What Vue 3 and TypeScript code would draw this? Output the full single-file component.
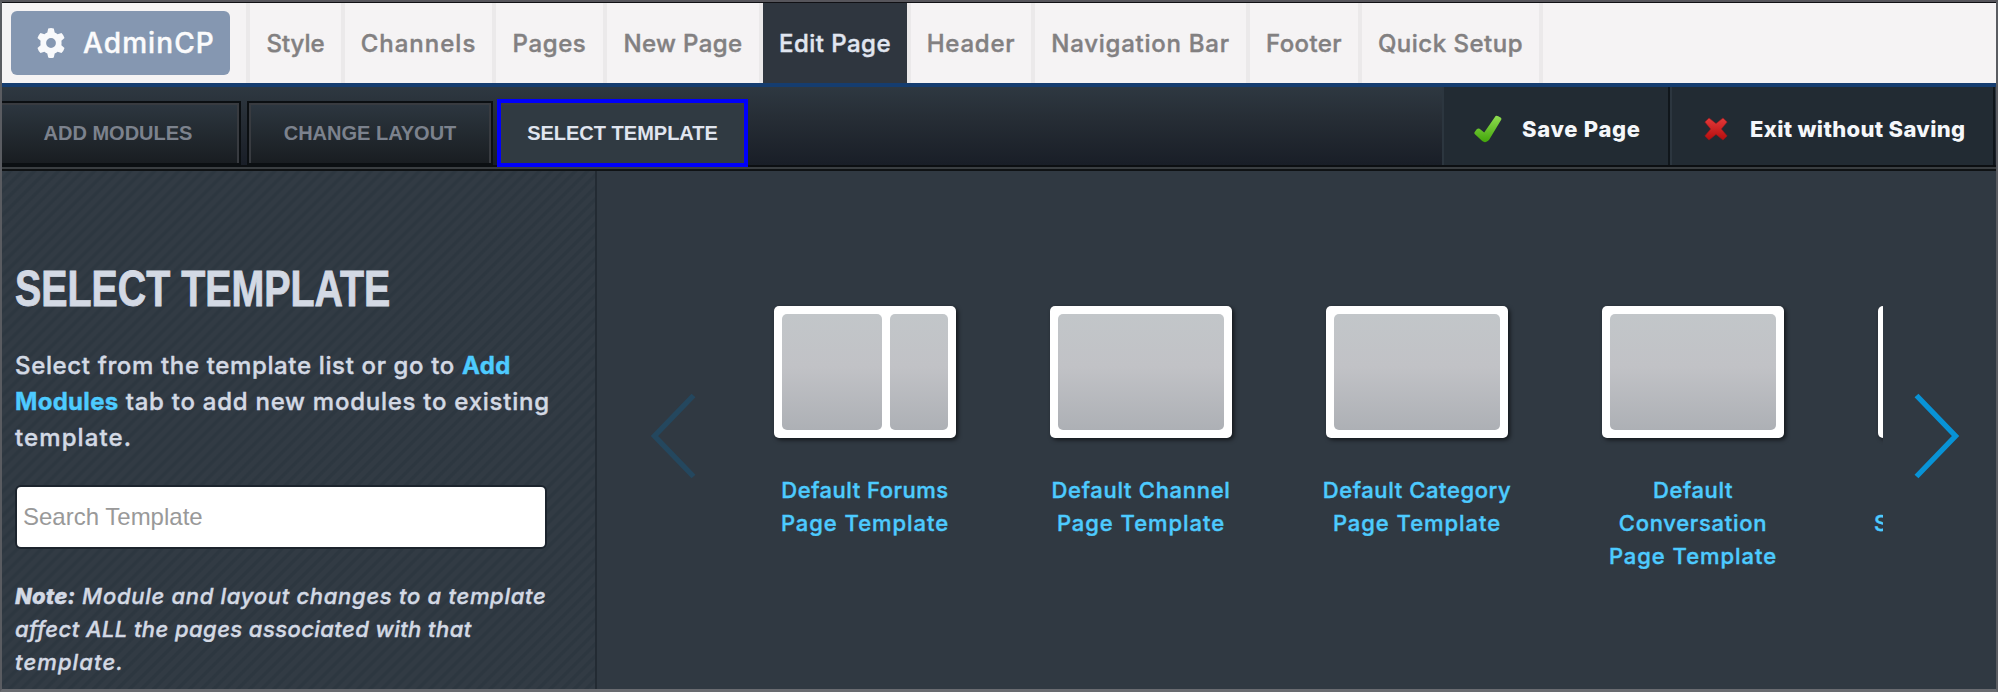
<script setup lang="ts">
interface NavItem {
  label: string
  width: number
  tracking: number
  active?: boolean
}

interface Line {
  text: string
  tracking: number
}

interface Template {
  lines: Line[]
  columns: number[]
}

const navItems: NavItem[] = [
  { label: 'Style', width: 95, tracking: 0 },
  { label: 'Channels', width: 151, tracking: 1 },
  { label: 'Pages', width: 111, tracking: 0.6 },
  { label: 'New Page', width: 156, tracking: 0.4 },
  { label: 'Edit Page', width: 148, tracking: 0.45, active: true },
  { label: 'Header', width: 124, tracking: 0.75 },
  { label: 'Navigation Bar', width: 215, tracking: 0.75 },
  { label: 'Footer', width: 112, tracking: 0.4 },
  { label: 'Quick Setup', width: 181, tracking: 0.5 },
]

const pageTemplate: Line = { text: 'Page Template', tracking: 0.95 }

const templates: Template[] = [
  { lines: [{ text: 'Default Forums', tracking: 0.5 }, pageTemplate], columns: [100, 58] },
  { lines: [{ text: 'Default Channel', tracking: 0.7 }, pageTemplate], columns: [166] },
  { lines: [{ text: 'Default Category', tracking: 0.6 }, pageTemplate], columns: [166] },
  {
    lines: [{ text: 'Default', tracking: 0.6 }, { text: 'Conversation', tracking: 0.7 }, pageTemplate],
    columns: [166],
  },
]
</script>

<template>
  <div class="window">
    <nav class="nav">
      <div class="brand-cell">
        <a class="brand">
          <svg class="gear" viewBox="0 0 28 30" width="28" height="30">
            <path
              fill="#f8f9fb"
              fill-rule="evenodd"
              d="M11.2 0.6 Q14 -0.4 16.8 0.6 L17.7 4.6 Q19.3 5.2 20.6 6.2 L24.5 5 Q26.8 7.2 27.5 10 L24.4 12.8 Q24.7 15 24.4 17.2 L27.5 20 Q26.8 22.8 24.5 25 L20.6 23.8 Q19.3 24.8 17.7 25.4 L16.8 29.4 Q14 30.4 11.2 29.4 L10.3 25.4 Q8.7 24.8 7.4 23.8 L3.5 25 Q1.2 22.8 0.5 20 L3.6 17.2 Q3.3 15 3.6 12.8 L0.5 10 Q1.2 7.2 3.5 5 L7.4 6.2 Q8.7 5.2 10.3 4.6 Z M14 10.1 A4.9 4.9 0 1 0 14 19.9 A4.9 4.9 0 1 0 14 10.1 Z"
            />
          </svg>
          <span>AdminCP</span>
        </a>
      </div>
      <a
        v-for="item in navItems"
        :key="item.label"
        class="nav-item"
        :class="{ active: item.active }"
        :style="{ width: item.width + 'px', letterSpacing: item.tracking + 'px' }"
      >{{ item.label }}</a>
    </nav>

    <div class="toolbar">
      <div class="tabs">
        <a class="tab first">ADD MODULES</a>
        <a class="tab second">CHANGE LAYOUT</a>
        <a class="tab selected">SELECT TEMPLATE</a>
      </div>
      <div class="actions">
        <a class="action save">
          <svg width="28" height="28" viewBox="0 0 28 28">
            <defs>
              <linearGradient id="check" x1="0" y1="0" x2="0" y2="1">
                <stop offset="0" stop-color="#8fdd50" />
                <stop offset="1" stop-color="#43a60b" />
              </linearGradient>
            </defs>
            <path fill="url(#check)" d="M21.6 1 Q23 .1 26.9 2.8 Q27.7 3.6 27.2 4.7 L15 25 Q11.5 28.7 8.2 26 L.7 19 Q0 18.1 .7 17 L2.7 14.2 Q4.1 13 5.6 13.8 L10.2 17.6 Z" />
          </svg>
          <span>Save Page</span>
        </a>
        <a class="action exit">
          <svg width="24" height="24" viewBox="0 0 24 24">
            <defs>
              <linearGradient id="cross" x1="0" y1="0" x2="0" y2="1">
                <stop offset="0" stop-color="#e43a3a" />
                <stop offset="1" stop-color="#b50d0d" />
              </linearGradient>
            </defs>
            <path fill="url(#cross)" stroke="#8e1a1e" stroke-width=".6" d="M5 .9 L12 6.6 L19 .9 L23.2 5 L17.4 12 L23.2 19 L19 23.1 L12 17.4 L5 23.1 L.8 19 L6.6 12 L.8 5 Z" />
          </svg>
          <span>Exit without Saving</span>
        </a>
      </div>
    </div>

    <main class="content">
      <aside class="side">
        <h1>SELECT TEMPLATE</h1>
        <p class="intro">
          <span class="i1">Select from the template list or go to <b>Add</b></span><br>
          <span class="i2"><b>Modules</b> tab to add new modules to existing</span><br>
          <span class="i3">template.</span>
        </p>
        <input class="search" type="text" placeholder="Search Template">
        <p class="note">
          <span class="n1"><b>Note:</b> Module and layout changes to a template</span><br>
          <span class="n2">affect ALL the pages associated with that</span><br>
          <span class="n3">template.</span>
        </p>
      </aside>

      <section class="carousel">
        <svg class="arrow prev" width="46" height="86" viewBox="0 0 46 86">
          <path d="M43.5 2.5 L4.5 43 L43.5 83.5" fill="none" stroke="#24475e" stroke-width="5.4" />
        </svg>
        <div class="track">
          <a v-for="(t, i) in templates" :key="i" class="card">
            <div class="thumb">
              <div v-for="(c, j) in t.columns" :key="j" class="col" :style="{ width: c + 'px' }"></div>
            </div>
            <div class="label">
              <div
                v-for="line in t.lines"
                :key="line.text"
                :style="{ letterSpacing: line.tracking + 'px' }"
              >{{ line.text }}</div>
            </div>
          </a>
          <a class="card partial">
            <div class="thumb"></div>
            <div class="label">S</div>
          </a>
        </div>
        <svg class="arrow next" width="46" height="86" viewBox="0 0 46 86">
          <path d="M2.5 2.5 L41.5 43 L2.5 83.5" fill="none" stroke="#0893d6" stroke-width="5.4" />
        </svg>
      </section>
    </main>
  </div>
</template>

<style>
body {
  background: #303942;
}
</style>

<style scoped>
.window {
  box-sizing: border-box;
  width: 1998px;
  height: 692px;
  overflow: hidden;
  border: 2px solid #5a5c61;
  border-top-color: #56555b;
  border-bottom: 3px solid #696b70;
  background: #303942;
  font-family: Inter, "Open Sans", sans-serif;
  display: flex;
  flex-direction: column;
}

.brand,
.nav-item,
.intro,
.note,
.label {
  -webkit-text-stroke: 0.4px currentColor;
}

.nav {
  box-sizing: border-box;
  height: 85px;
  flex: none;
  display: flex;
  border-top: 1px solid #101014;
  border-bottom: 4px solid #153d70;
  background: #f5f3f4;
}

.brand-cell {
  box-sizing: border-box;
  flex: none;
  width: 248px;
  border-right: 4px solid #ebe9ea;
  padding: 8px 0 0 9px;
}

.brand {
  box-sizing: border-box;
  width: 219px;
  height: 64px;
  padding-left: 26px;
  display: flex;
  align-items: center;
  gap: 18px;
  border-radius: 6px;
  background: #8597b1;
  color: #fbfbfc;
  font-size: 28px;
  font-weight: 550;
  letter-spacing: 1.1px;
}

.gear {
  flex: none;
}

.nav-item {
  box-sizing: border-box;
  flex: none;
  border-right: 4px solid #ebe9ea;
  color: #828081;
  font-size: 24px;
  font-weight: 550;
  line-height: 81px;
  text-align: center;
  white-space: nowrap;
}

.nav-item.active {
  background: #2f363f;
  background-clip: padding-box;
  color: #e1e6f0;
}

.toolbar {
  box-sizing: border-box;
  flex: none;
  height: 84px;
  display: flex;
  justify-content: space-between;
  border-bottom: 2px solid #0f1214;
  background:
    linear-gradient(#3a3e41, #3a3e41) 0 100% / 100% 2px no-repeat,
    linear-gradient(#0c0f12, #0c0f12) 0 78px / 100% 2px no-repeat,
    linear-gradient(#2e3841, #262d35 32px, #191e27 78px);
}

.tabs {
  display: flex;
  align-items: flex-start;
  padding-top: 12px;
}

.tab {
  box-sizing: border-box;
  height: 66px;
  margin-top: 2px;
  border: 2px solid #0b0f12;
  border-bottom-width: 4px;
  box-shadow: inset 2px 2px 0 #383b40, inset -2px 0 0 #383b40;
  color: #7c828d;
  background: linear-gradient(#2d3740, #191d21);
  font: bold 20px/61px "Liberation Sans", Arial, sans-serif;
  text-align: center;
}

.tab.first {
  width: 239px;
  margin-right: 6px;
  border-left: 0;
  padding-right: 5px;
  box-shadow: inset -2px 2px 0 #383b40;
}

.tab.second {
  width: 246px;
  margin-right: 4px;
}

.tab.selected {
  width: 251px;
  height: 68px;
  margin-top: 0;
  border: 4px solid #0000fa;
  box-shadow: inset 1px 2px 0 #383b40, inset -1px 0 0 #383b40;
  background: #303a42;
  color: #e0e5ef;
}

.actions {
  display: flex;
  height: 78px;
}

.action {
  box-sizing: border-box;
  display: flex;
  align-items: center;
  border-left: 2px solid #2c363f;
  border-right: 2px solid #10161b;
  background: #222b33;
  color: #f5f7fa;
  font-size: 22px;
  font-weight: 800;
  white-space: nowrap;
}

.action svg {
  margin-top: 6px;
}

.action span {
  padding-top: 6px;
}

.save {
  width: 228px;
  padding-left: 30px;
  gap: 20px;
  letter-spacing: 0.7px;
}

.exit {
  width: 325px;
  margin-right: 1px;
  padding-left: 32px;
  gap: 22px;
  letter-spacing: 0.32px;
}

.content {
  flex: 1;
  min-height: 0;
  display: flex;
}

.side {
  box-sizing: border-box;
  flex: none;
  width: 595px;
  border-right: 2px solid #232b33;
  padding-left: 13px;
  background: repeating-linear-gradient(135deg, #323b44 0, #323b44 3.5px, #2d3740 5px, #2d3740 7px, #323b44 8.5px);
  color: #d3d9e4;
}

h1 {
  margin: 89px 0 0;
  font: bold 50px/58px "Liberation Sans", Arial, sans-serif;
  transform: scaleX(0.787);
  transform-origin: 0 0;
  -webkit-text-stroke: 0.9px currentColor;
  white-space: nowrap;
}

.intro {
  margin: 30px 0 0;
  font-size: 24px;
  font-weight: 550;
  line-height: 36px;
  white-space: nowrap;
}

.intro b {
  color: #4dcbff;
  font-weight: 750;
  letter-spacing: 0.3px;
}

.i1 {
  letter-spacing: 0.64px;
}

.i2 {
  letter-spacing: 0.74px;
}

.i3 {
  letter-spacing: 1.1px;
}

.search {
  box-sizing: border-box;
  display: block;
  width: 532px;
  height: 64px;
  margin-top: 29px;
  padding: 0 6px;
  border: 2px solid #1c242d;
  border-radius: 6px;
  background: #fff;
  font: 24px "Liberation Sans", Arial, sans-serif;
}

.search::placeholder {
  color: #999;
}

.note {
  margin: 31px 0 0;
  font-size: 22px;
  font-style: italic;
  font-weight: 550;
  line-height: 33px;
  white-space: nowrap;
}

.note b {
  font-weight: 800;
  letter-spacing: 0.2px;
}

.n1 {
  letter-spacing: 0.7px;
}

.n2 {
  letter-spacing: 0.42px;
}

.n3 {
  letter-spacing: 1.1px;
}

.carousel {
  flex: 1;
  display: flex;
  align-items: flex-start;
}

.arrow {
  flex: none;
  margin-top: 222px;
}

.prev {
  margin-left: 53px;
}

.next {
  margin-left: 31px;
}

.track {
  width: 1156px;
  height: 400px;
  margin: 133px 0 0 31px;
  overflow: hidden;
  display: flex;
}

.card {
  flex: none;
  width: 276px;
  display: flex;
  flex-direction: column;
  align-items: center;
}

.thumb {
  box-sizing: border-box;
  width: 182px;
  height: 132px;
  margin-top: 2px;
  padding: 8px;
  display: flex;
  gap: 8px;
  border-radius: 5px;
  background: #fff;
  box-shadow: 2px 2px 4px rgba(0, 0, 0, 0.6);
}

.col {
  border-radius: 5px;
  background: linear-gradient(#c2c6c9, #c1c2c6 45%, #adb0b5);
}

.label {
  margin-top: 36px;
  color: #4dcbff;
  font-size: 22px;
  font-weight: 550;
  line-height: 33px;
  text-align: center;
  white-space: nowrap;
}

.partial {
  align-items: flex-start;
  box-sizing: border-box;
  padding-left: 47px;
}

.partial .label {
  margin: 69px 0 0 -4px;
}
</style>
